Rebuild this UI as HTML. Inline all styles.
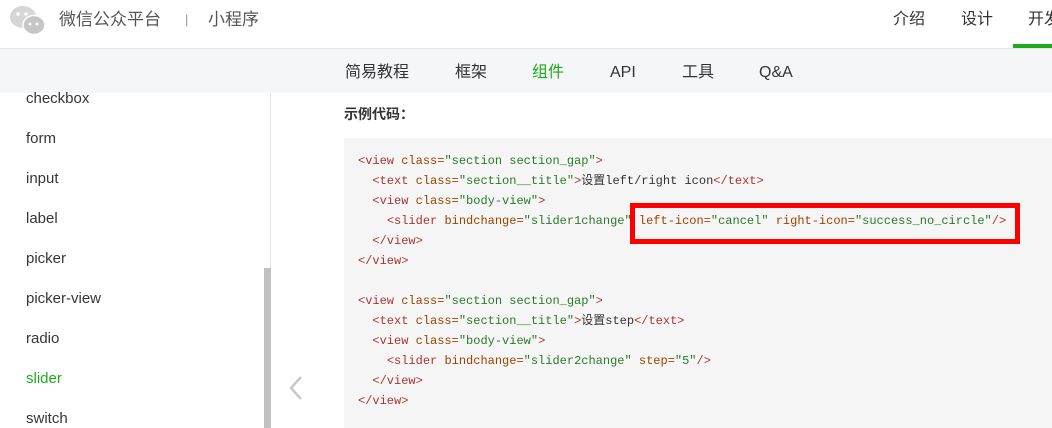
<!DOCTYPE html>
<html><head><meta charset="utf-8"><style>
*{margin:0;padding:0;box-sizing:border-box}
body{width:1052px;height:428px;overflow:hidden;background:#fff;font-family:"Liberation Sans","Noto Sans CJK SC",sans-serif;position:relative}
.hdr{position:absolute;left:0;top:0;width:1052px;height:49px;background:#fff;border-bottom:1px solid #e4e6e8}
.t{position:absolute;white-space:nowrap}
.hdr .t{top:0;line-height:40px}
.sub{position:absolute;left:0;top:49px;width:1052px;height:44px;background:#f5f6f7}
.sub .t{top:0;line-height:48px;font-size:16px;color:#333}
.side{position:absolute;left:0;top:93px;width:271px;height:335px;background:#fff;border-right:1px solid #e8e8e8}
.side div{position:absolute;left:26px;font-size:15px;color:#353535}
.code{position:absolute;left:344px;top:138px;width:708px;height:290px;background:#f5f5f5}
pre{position:absolute;left:358px;top:151px;font-family:"Liberation Mono","Noto Sans CJK SC",monospace;font-size:12px;line-height:20px;color:#333}
.g{color:#a33}.a{color:#994500}.s{color:#2a7a2a}
</style></head><body>
<div class="hdr">
<svg style="position:absolute;left:9px;top:4px" width="38" height="32" viewBox="0 0 38 32"><ellipse cx="14" cy="13" rx="13" ry="11" fill="#d6d6d6"/><ellipse cx="25" cy="21" rx="11" ry="9.5" fill="#c6c6c6" stroke="#fff" stroke-width="1.5"/><circle cx="9" cy="10" r="1.7" fill="#fff"/><circle cx="17" cy="10" r="1.7" fill="#fff"/><circle cx="21" cy="20" r="1.4" fill="#fff"/><circle cx="28" cy="20" r="1.4" fill="#fff"/></svg>
<div class="t" style="left:59px;font-size:17px;color:#555">微信公众平台</div>
<div class="t" style="left:185px;font-size:13px;color:#999">|</div>
<div class="t" style="left:208px;font-size:17px;color:#555">小程序</div>
<div class="t" style="left:893px;font-size:16px;color:#333">介绍</div>
<div class="t" style="left:961px;font-size:16px;color:#333">设计</div>
<div class="t" style="left:1028px;font-size:16px;color:#333">开发</div>
<div style="position:absolute;left:1013px;top:44px;width:39px;height:4px;background:#1aad19"></div>
</div>
<div class="sub">
<div class="t" style="left:345px">简易教程</div>
<div class="t" style="left:455px">框架</div>
<div class="t" style="left:532px;color:#1aad19">组件</div>
<div class="t" style="left:610px">API</div>
<div class="t" style="left:682px">工具</div>
<div class="t" style="left:759px">Q&amp;A</div>
</div>
<div class="side">
<div style="top:-3px">checkbox</div>
<div style="top:37px">form</div>
<div style="top:77px">input</div>
<div style="top:117px">label</div>
<div style="top:157px">picker</div>
<div style="top:197px">picker-view</div>
<div style="top:237px">radio</div>
<div style="top:277px;color:#1aad19">slider</div>
<div style="top:317px">switch</div>
<span style="position:absolute;left:264px;top:175px;width:7px;height:160px;background:#c1c1c1"></span>
</div>
<svg style="position:absolute;left:288px;top:375px" width="16" height="26" viewBox="0 0 16 26"><path d="M13 2 L3 13 L13 24" fill="none" stroke="#c8c8c8" stroke-width="2.5"/></svg>
<div class="t" style="left:344px;top:104px;font-size:14px;font-weight:bold;color:#333">示例代码：</div>
<div class="code"></div>
<pre><span class="g">&lt;view</span> <span class="a">class=</span><span class="s">"section section_gap"</span><span class="g">&gt;</span>
  <span class="g">&lt;text</span> <span class="a">class=</span><span class="s">"section__title"</span><span class="g">&gt;</span>设置left/right icon<span class="g">&lt;/text&gt;</span>
  <span class="g">&lt;view</span> <span class="a">class=</span><span class="s">"body-view"</span><span class="g">&gt;</span>
    <span class="g">&lt;slider</span> <span class="a">bindchange=</span><span class="s">"slider1change"</span> <span class="a">left-icon=</span><span class="s">"cancel"</span> <span class="a">right-icon=</span><span class="s">"success_no_circle"</span><span class="g">/&gt;</span>
  <span class="g">&lt;/view&gt;</span>
<span class="g">&lt;/view&gt;</span>

<span class="g">&lt;view</span> <span class="a">class=</span><span class="s">"section section_gap"</span><span class="g">&gt;</span>
  <span class="g">&lt;text</span> <span class="a">class=</span><span class="s">"section__title"</span><span class="g">&gt;</span>设置step<span class="g">&lt;/text&gt;</span>
  <span class="g">&lt;view</span> <span class="a">class=</span><span class="s">"body-view"</span><span class="g">&gt;</span>
    <span class="g">&lt;slider</span> <span class="a">bindchange=</span><span class="s">"slider2change"</span> <span class="a">step=</span><span class="s">"5"</span><span class="g">/&gt;</span>
  <span class="g">&lt;/view&gt;</span>
<span class="g">&lt;/view&gt;</span></pre>
<div style="position:absolute;left:630px;top:203px;width:390px;height:41px;border:5px solid #f00"></div>
</body></html>
